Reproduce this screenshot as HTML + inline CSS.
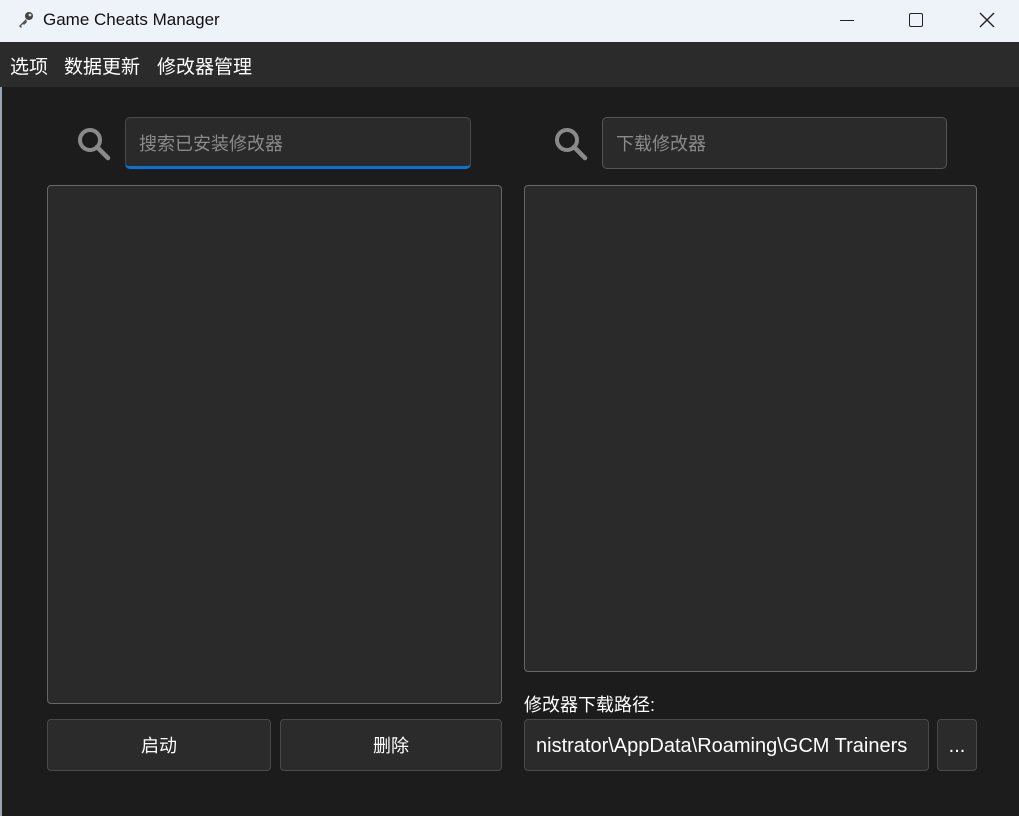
<!DOCTYPE html>
<html><head><meta charset="utf-8"><style>
*{margin:0;padding:0;box-sizing:border-box}
body{width:1019px;height:816px;background:#1c1c1c;position:relative;overflow:hidden;font-family:"Liberation Sans","Noto Sans CJK SC",sans-serif;}
.title{position:absolute;left:0;top:0;width:1019px;height:42px;background:#eef2f9;color:#111;font-size:17px}
.menu{position:absolute;left:0;top:42px;width:1019px;height:45px;background:#2b2b2b;color:#fff;font-size:19px}
.box{position:absolute;background:#2a2a2a;border:1px solid #666;border-radius:4px}
.inp{position:absolute;background:#2a2a2a;border:1px solid #4a4a4a;border-radius:5px;color:#8a8a8a;font-size:18px;padding-left:13px;line-height:52px}
.btn{position:absolute;background:#2b2b2b;border:1px solid #4a4a4a;border-radius:4px;color:#fff;font-size:18px;text-align:center;line-height:52px}
.t{position:absolute;white-space:nowrap}
</style></head><body>
<div style="position:absolute;left:0;top:0;width:2px;height:816px;background:#9aa4b0"></div>
<div class="title">
<svg style="position:absolute;left:16px;top:10px" width="20" height="20" viewBox="0 0 20 20"><circle cx="13" cy="6" r="4" fill="#444"/><circle cx="14" cy="5" r="1.4" fill="#ddd"/><path d="M10 9 L3 16 L5 18 L6 17 L5 16 L7 14 L8 15 L11 12Z" fill="#555"/></svg>
<span class="t" style="left:43px;top:10px">Game Cheats Manager</span>
<div class="t" style="left:840px;top:20px;width:14px;height:1px;background:#222"></div>
<div class="t" style="left:909px;top:13px;width:14px;height:14px;border:1.5px solid #222;border-radius:2px"></div>
<svg class="t" style="left:979px;top:12px" width="16" height="16"><path d="M1 1L15 15M15 1L1 15" stroke="#222" stroke-width="1.4"/></svg>
</div>
<div class="menu"><span class="t" style="left:10px;top:10px">选项</span><span class="t" style="left:64px;top:10px">数据更新</span><span class="t" style="left:157px;top:10px">修改器管理</span></div>

<svg class="t" style="left:76px;top:126px" width="36" height="36" viewBox="0 0 36 36"><circle cx="14" cy="14" r="10" fill="none" stroke="#8a8a8a" stroke-width="4"/><path d="M21 21L32 32" stroke="#8a8a8a" stroke-width="4.5" stroke-linecap="round"/></svg>
<div class="inp" style="left:125px;top:117px;width:346px;height:52px;border-bottom:3px solid #0a72d0">搜索已安装修改器</div>
<svg class="t" style="left:553px;top:126px" width="36" height="36" viewBox="0 0 36 36"><circle cx="14" cy="14" r="10" fill="none" stroke="#8a8a8a" stroke-width="4"/><path d="M21 21L32 32" stroke="#8a8a8a" stroke-width="4.5" stroke-linecap="round"/></svg>
<div class="inp" style="left:602px;top:117px;width:345px;height:52px;border-color:#555">下载修改器</div>

<div class="box" style="left:47px;top:185px;width:455px;height:519px"></div>
<div class="box" style="left:524px;top:185px;width:453px;height:487px"></div>

<div class="btn" style="left:47px;top:719px;width:224px;height:52px">启动</div>
<div class="btn" style="left:280px;top:719px;width:222px;height:52px">删除</div>
<span class="t" style="left:524px;top:691px;color:#fff;font-size:18px">修改器下载路径:</span>
<div class="btn" style="left:524px;top:719px;width:405px;height:52px;text-align:left;padding-left:11px;font-size:20px;overflow:hidden">nistrator\AppData\Roaming\GCM Trainers</div>
<div class="btn" style="left:937px;top:719px;width:40px;height:52px;font-size:20px">...</div>
</body></html>
